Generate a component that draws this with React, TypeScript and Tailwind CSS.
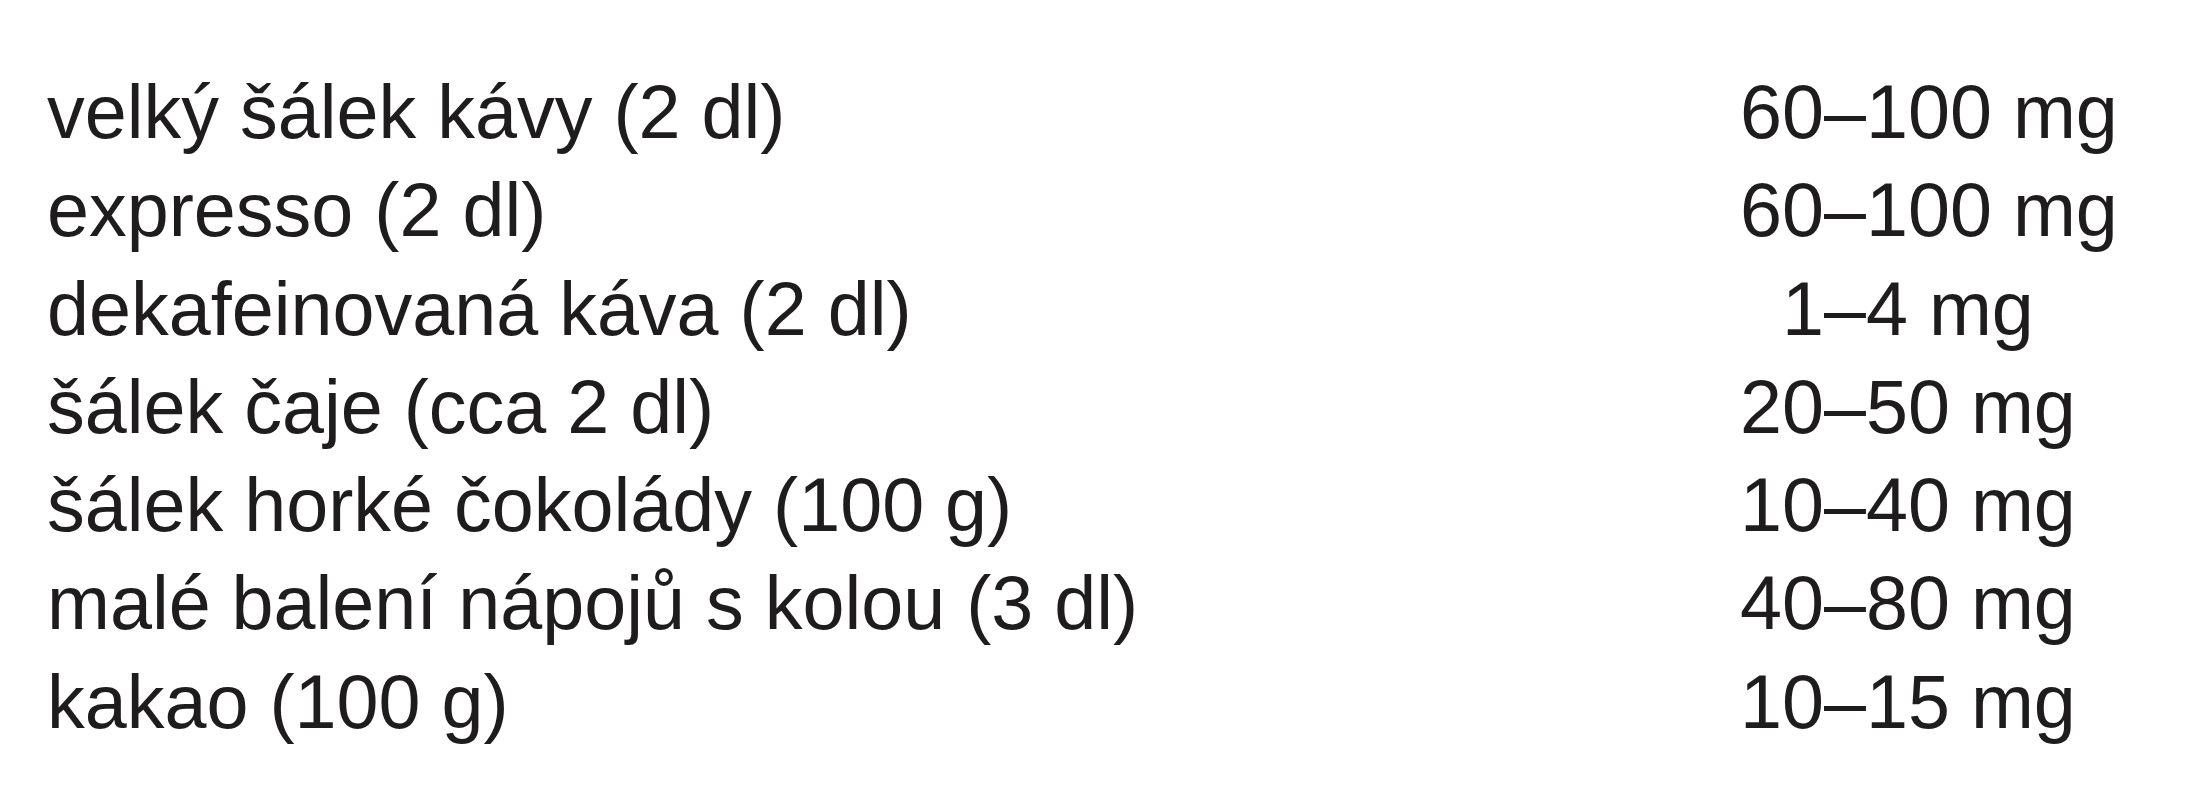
const rows = [
  { item: 'velký šálek kávy (2 dl)', amount: '60–100 mg' },
  { item: 'expresso (2 dl)', amount: '60–100 mg' },
  { item: 'dekafeinovaná káva (2 dl)', amount: '1–4 mg', indent: true },
  { item: 'šálek čaje (cca 2 dl)', amount: '20–50 mg' },
  { item: 'šálek horké čokolády (100 g)', amount: '10–40 mg' },
  { item: 'malé balení nápojů s kolou (3 dl)', amount: '40–80 mg' },
  { item: 'kakao (100 g)', amount: '10–15 mg' },
]

export default function App() {
  return (
    <div className="min-h-[800px] w-full bg-white pt-[63px] pl-[47px] text-[#1e1c1d] font-['Liberation_Sans',Arial,sans-serif] text-[75.5px] leading-[98.3px]">
      {/* caffeine table */}
      <div className="grid grid-cols-[1693px_1fr]">
        {rows.map((row) => (
          <div key={row.item} className="contents">
            <div className="whitespace-nowrap">{row.item}</div>
            <div className={row.indent ? 'whitespace-nowrap pl-[42px]' : 'whitespace-nowrap'}>
              {row.amount}
            </div>
          </div>
        ))}
      </div>
    </div>
  )
}
